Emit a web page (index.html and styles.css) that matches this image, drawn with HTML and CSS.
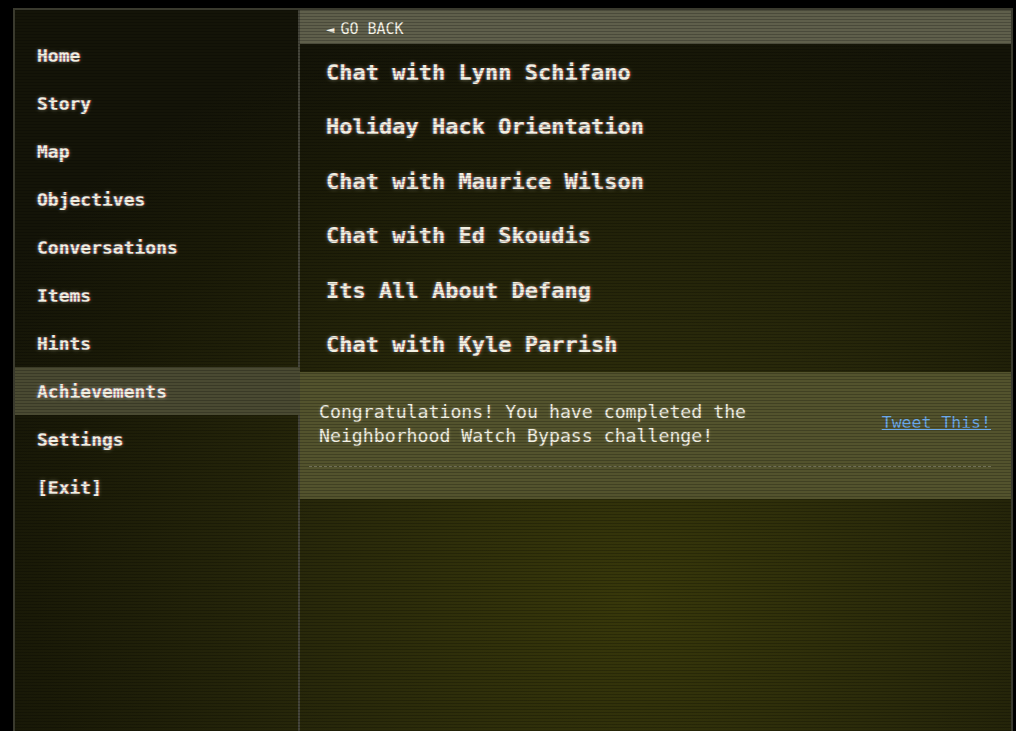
FILE: index.html
```html
<!DOCTYPE html>
<html lang="en">
<head>
    <meta charset="utf-8">
    <title>Achievements</title>
    <link rel="stylesheet" href="styles.css">
</head>
<body>
    <div class="frame">
        <nav class="sidebar">
            <ul>
                <li><a href="#">Home</a></li>
                <li><a href="#">Story</a></li>
                <li><a href="#">Map</a></li>
                <li><a href="#">Objectives</a></li>
                <li><a href="#">Conversations</a></li>
                <li><a href="#">Items</a></li>
                <li><a href="#">Hints</a></li>
                <li class="active"><a href="#">Achievements</a></li>
                <li><a href="#">Settings</a></li>
                <li><a href="#">[Exit]</a></li>
            </ul>
        </nav>
        <main class="content">
            <div class="go-back"><span class="arrow">&#9668;</span> GO BACK</div>
            <ul class="achievements">
                <li>Chat with Lynn Schifano</li>
                <li>Holiday Hack Orientation</li>
                <li>Chat with Maurice Wilson</li>
                <li>Chat with Ed Skoudis</li>
                <li>Its All About Defang</li>
                <li>Chat with Kyle Parrish</li>
            </ul>
            <!-- popup for the latest achievement -->
            <div class="notice">
                <div class="notice-body">
                    <p>Congratulations! You have completed the<br>Neighborhood Watch Bypass challenge!</p>
                    <a href="#" class="tweet">Tweet This!</a>
                </div>
                <div class="notice-rule"></div>
            </div>
        </main>
    </div>
</body>
</html>
```

FILE: styles.css
```css
body {
    margin: 0;
    padding: 0;
    background: #000;
    font-family: "DejaVu Sans Mono", "Liberation Mono", monospace;
    color: #f2f0e2;
    height: 100vh;
    overflow: hidden;
}

.frame {
    position: relative;
    box-sizing: border-box;
    margin: 8px 0 0 13px;
    width: 1000px;
    height: calc(100vh - 8px);
    border: 2px solid #3a3a2e;
    border-bottom: none;
    display: grid;
    grid-template-columns: 285px 1fr;
    background: radial-gradient(ellipse 75% 85% at 62% 82%, #38380a 0%, #28280a 45%, #1a1a07 80%, #141408 100%);
}

/* scanline overlay */
.frame::after {
    content: "";
    position: absolute;
    inset: 0;
    pointer-events: none;
    background: repeating-linear-gradient(to bottom, rgba(0, 0, 0, 0.22) 0 1px, transparent 1px 3px);
}

.sidebar {
    border-right: 2px solid #45453a;
}

.sidebar ul {
    list-style: none;
    margin: 0;
    padding: 21px 0 0 0;
}

.sidebar li {
    height: 48px;
    display: flex;
    align-items: center;
    padding-left: 22px;
}

.sidebar li.active {
    background: #4a4a32;
    margin-right: -2px;
}

.sidebar a {
    color: #f2f0e2;
    text-decoration: none;
    font-weight: bold;
    font-size: 18px;
    text-shadow: 1px 0 rgba(255, 60, 60, 0.45), -1px 0 rgba(80, 140, 255, 0.45), 0 0 4px rgba(255, 255, 220, 0.35);
}

.content {
    display: flex;
    flex-direction: column;
}

.go-back {
    box-sizing: border-box;
    height: 34px;
    background: #5f5f4b;
    display: flex;
    align-items: center;
    padding: 3px 0 0 26px;
    font-size: 15px;
    color: #f4f2e6;
}

.go-back .arrow {
    font-size: 14px;
    margin-right: 6px;
}

.achievements {
    list-style: none;
    margin: 0;
    padding: 1px 0 0 26px;
}

.achievements li {
    height: 54.5px;
    display: flex;
    align-items: center;
    font-size: 22px;
    font-weight: bold;
    text-shadow: 1px 0 rgba(255, 60, 60, 0.45), -1px 0 rgba(80, 140, 255, 0.45), 0 0 4px rgba(255, 255, 220, 0.35);
}

.notice {
    background: #53532d;
    padding: 28px 20px 32px 9px;
}

.notice-body {
    display: flex;
    align-items: center;
    justify-content: space-between;
    padding-left: 10px;
}

.notice-body p {
    margin: 0;
    font-size: 18.2px;
    line-height: 24px;
    color: #f2f0e4;
    text-shadow: 0 0 3px rgba(255, 255, 220, 0.3);
}

.tweet {
    color: #6aa8e8;
    font-size: 16.5px;
    margin-top: -4px;
}

.notice-rule {
    margin-top: 18px;
    border-top: 1px dashed #8e8e70;
}
```
